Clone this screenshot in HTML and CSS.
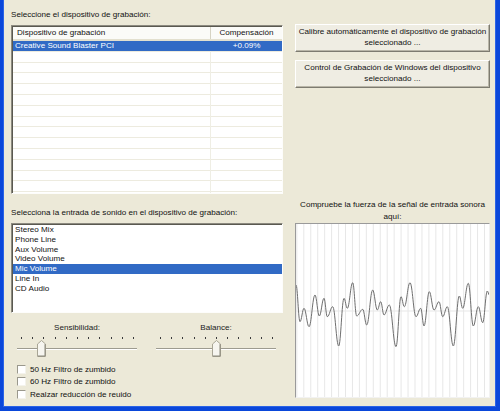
FILE: index.html
```html
<!DOCTYPE html>
<html>
<head>
<meta charset="utf-8">
<link rel="stylesheet" href="styles.css">
</head>
<body>
<div class="window">
  <div class="content">
    <div class="col-left">
      <div class="label l1">Seleccione el dispositivo de grabación:</div>
      <div class="listview">
        <div class="lv-header">
          <div class="lv-h c1">Dispositivo de grabación</div>
          <div class="lv-h c2">Compensación</div>
        </div>
        <div class="lv-body">
          <div class="lv-row sel">
            <div class="c1">Creative Sound Blaster PCI</div>
            <div class="c2">+0.09%</div>
          </div>
        </div>
      </div>
      <div class="label l2">Selecciona la entrada de sonido en el dispositivo de grabación:</div>
      <div class="listbox">
        <div class="li">Stereo Mix</div>
        <div class="li">Phone Line</div>
        <div class="li">Aux Volume</div>
        <div class="li">Video Volume</div>
        <div class="li sel">Mic Volume</div>
        <div class="li">Line In</div>
        <div class="li">CD Audio</div>
      </div>
      <div class="sliders">
        <div class="slider">
          <div class="s-label">Sensibilidad:</div>
          <div class="ticks"><span></span><span></span><span></span><span></span><span></span><span></span><span></span><span></span><span></span><span></span><span></span></div>
          <div class="track-area">
            <div class="groove"></div>
            <svg class="thumb thumb-sens" width="9" height="17" viewBox="0 0 9 17"><path d="M0.5 4 L4.5 0.5 L8.5 4 V16.5 H0.5 Z" fill="#f6f5ef" stroke="#a8a595"/><path d="M8 4.2 V16 H1" fill="none" stroke="#8a887b"/></svg>
          </div>
        </div>
        <div class="slider">
          <div class="s-label">Balance:</div>
          <div class="ticks"><span></span><span></span><span></span><span></span><span></span><span></span><span></span><span></span><span></span><span></span><span></span></div>
          <div class="track-area">
            <div class="groove"></div>
            <svg class="thumb thumb-bal" width="9" height="17" viewBox="0 0 9 17"><path d="M0.5 4 L4.5 0.5 L8.5 4 V16.5 H0.5 Z" fill="#f6f5ef" stroke="#a8a595"/><path d="M8 4.2 V16 H1" fill="none" stroke="#8a887b"/></svg>
          </div>
        </div>
      </div>
      <div class="checks">
        <div class="check"><span class="box"></span>50 Hz Filtro de zumbido</div>
        <div class="check"><span class="box"></span>60 Hz Filtro de zumbido</div>
        <div class="check"><span class="box"></span>Realzar reducción de reuido</div>
      </div>
    </div>
    <div class="col-right">
      <div class="btn b1">Calibre automáticamente el dispositivo de grabación<br>seleccionado ...</div>
      <div class="btn b2">Control de Grabación de Windows del dispositivo<br>seleccionado ...</div>
      <div class="g-label">Compruebe la fuerza de la señal de entrada sonora<br>aquí:</div>
      <div class="graph">
        <svg class="graph-svg" viewBox="1 1 193 173" preserveAspectRatio="none">
          <defs>
            <pattern id="vgrid" x="8.3" y="0" width="6.95" height="175" patternUnits="userSpaceOnUse">
              <rect x="0" y="0" width="1" height="175" fill="#e7e7e7"/>
            </pattern>
          </defs>
          <rect x="0" y="0" width="195" height="175" fill="#ffffff"/>
          <rect x="0" y="0" width="195" height="175" fill="url(#vgrid)"/>
          <rect x="0" y="87.5" width="195" height="1" fill="#e7e7e7"/>
          <path fill="none" stroke="#6e6e6e" stroke-width="1" d="M1 62 C2.6 62,3.4 98.7,5 98.7 C6.6 98.7,7.4 85.3,9 85.3 C11 85.3,12 103.7,14 103.7 C16.4 103.7,17.6 72,20 72 C21.7 72,22.6 93,24.3 93 C26.2 93,27.1 75.3,29 75.3 C30.3 75.3,31 93.7,32.3 93.7 C34.5 93.7,35.5 83.7,37.7 83.7 C40.1 83.7,41.3 123,43.7 123 C45.8 123,46.9 75.3,49 75.3 C50.3 75.3,51 85.3,52.3 85.3 C54.5 85.3,55.5 59.7,57.7 59.7 C59.3 59.7,60.1 93,61.7 93 C64.1 93,65.3 86.3,67.7 86.3 C69.3 86.3,70.1 102,71.7 102 C74.1 102,75.3 67,77.7 67 C79.5 67,80.5 87,82.3 87 C83.7 87,84.3 78.7,85.7 78.7 C87 78.7,87.7 92,89 92 C91.1 92,92.2 82,94.3 82 C97 82,98.3 123.7,101 123.7 C103 123.7,104 73.7,106 73.7 C107.3 73.7,108 83.7,109.3 83.7 C111.6 83.7,112.7 59.7,115 59.7 C117.4 59.7,118.6 93.7,121 93.7 C122.9 93.7,123.8 85.3,125.7 85.3 C127 85.3,127.7 103,129 103 C131.1 103,132.2 68.7,134.3 68.7 C136.2 68.7,137.1 87,139 87 C141 87,142 78.7,144 78.7 C145.5 78.7,146.2 93.7,147.7 93.7 C149.5 93.7,150.5 83.7,152.3 83.7 C154.7 83.7,155.9 123,158.3 123 C160.7 123,161.9 73,164.3 73 C165.7 73,166.3 85.3,167.7 85.3 C169.9 85.3,171.1 60.3,173.3 60.3 C175.3 60.3,176.3 103,178.3 103 C180.3 103,181.3 83.7,183.3 83.7 C185.1 83.7,185.9 99.7,187.7 99.7 C189.5 99.7,190.5 68,192.3 68 C193.1 68,193.5 72,194.3 72"/>
        </svg>
      </div>
    </div>
  </div>
</div>
</body>
</html>
```

FILE: styles.css
```css
html, body {
  margin: 0;
  padding: 0;
  background: #ece9d8;
}
body {
  font-family: "Liberation Sans", Arial, sans-serif;
  font-size: 8.1px;
  color: #111;
}
.window {
  width: 500px;
  height: 411px;
  box-sizing: border-box;
  background: #ece9d8;
  border-left: 3px solid #0a47da;
  border-right: 4px solid #0a47da;
  border-bottom: 4px solid #0a47da;
  box-shadow: inset 1px 0 #2a63e6, inset -1px -1px #2a63e6;
}
.content {
  display: flex;
  gap: 12px;
  padding-left: 8px;
}
.col-left {
  width: 272px;
  display: flex;
  flex-direction: column;
}
.col-right {
  width: 195px;
  display: flex;
  flex-direction: column;
}
.label {
  line-height: 12px;
  height: 12px;
  white-space: nowrap;
}
.l1 { margin-top: 9px; }
.l2 { margin-top: 13px; }

.listview {
  margin-top: 4px;
  height: 169px;
  box-sizing: border-box;
  background: #fff;
  border-top: 1px solid #8c8a80;
  border-left: 1px solid #8c8a80;
  border-right: 1px solid #fdfdfb;
  border-bottom: 1px solid #fdfdfb;
  box-shadow: inset 1px 1px #5a5950;
  display: flex;
  flex-direction: column;
  overflow: hidden;
}
.lv-header {
  display: flex;
  height: 12px;
  line-height: 12px;
  margin-left: 1px;
  margin-top: 1px;
  background: #fbfbf8;
  border-bottom: 2px solid #e3e0cf;
}
.c1 { width: 198px; box-sizing: border-box; white-space: nowrap; }
.c2 { flex: 1; text-align: center; white-space: nowrap; }
.lv-h.c1 { padding-left: 4px; border-right: 1px solid #d6d3c3; }
.lv-body {
  flex: 1;
  margin-left: 1px;
  background:
    linear-gradient(to right, transparent 0 197.5px, #efeee4 197.5px 198.5px, transparent 198.5px),
    repeating-linear-gradient(to bottom, #ffffff 0 9.8px, #edebdf 9.8px 10.8px);
}
.lv-row {
  display: flex;
  height: 9.8px;
  line-height: 10px;
}
.lv-row .c1 { padding-left: 2px; }
.lv-row.sel { background: #316ac5; color: #fff; }

.listbox {
  margin-top: 4px;
  height: 90px;
  box-sizing: border-box;
  background: #fff;
  border-top: 1px solid #8c8a80;
  border-left: 1px solid #8c8a80;
  border-right: 1px solid #fdfdfb;
  border-bottom: 1px solid #fdfdfb;
  box-shadow: inset 1px 1px #5a5950;
  padding-top: 1px;
  padding-left: 1px;
}
.li {
  height: 9.8px;
  line-height: 9.8px;
  padding-left: 2px;
  white-space: nowrap;
}
.li.sel { background: #316ac5; color: #fff; }

.sliders {
  display: flex;
  gap: 19px;
  margin-top: 9px;
  margin-left: 6px;
}
.slider {
  width: 120px;
  display: flex;
  flex-direction: column;
}
.s-label {
  text-align: center;
  line-height: 12px;
  height: 12px;
  color: #222;
}
.ticks {
  margin-top: 3px;
  height: 2px;
  display: flex;
  justify-content: space-between;
  padding: 0 3px 0 4px;
}
.ticks span {
  width: 1px;
  height: 2px;
  background: #3a3a3a;
}
.track-area {
  position: relative;
  margin-top: 2px;
  height: 16px;
}
.groove {
  margin-top: 7px;
  height: 1px;
  background: #9d9b8f;
  border-bottom: 1px solid #ffffff;
}
.thumb {
  position: absolute;
  top: -1px;
}
.thumb-sens { left: 20px; }
.thumb-bal { left: 56px; }

.checks {
  margin-top: 6px;
  padding-left: 6px;
  display: flex;
  flex-direction: column;
}
.check {
  height: 12.5px;
  display: flex;
  align-items: center;
  white-space: nowrap;
}
.box {
  width: 9px;
  height: 9px;
  box-sizing: border-box;
  background: #fff;
  border-top: 1px solid #9a988c;
  border-left: 1px solid #9a988c;
  border-right: 1px solid #f4f3ec;
  border-bottom: 1px solid #f4f3ec;
  margin-right: 4px;
}

.btn {
  height: 28px;
  box-sizing: border-box;
  display: flex;
  align-items: center;
  justify-content: center;
  text-align: center;
  line-height: 10.5px;
  background: #efede3;
  border-top: 1px solid #ffffff;
  border-left: 1px solid #ffffff;
  border-right: 1px solid #7d7b70;
  border-bottom: 1px solid #7d7b70;
  box-shadow: inset -1px -1px #b9b6a8;
  padding-bottom: 1px;
}
.b1 { margin-top: 24px; }
.b2 { margin-top: 8px; }
.g-label {
  margin-top: 111px;
  text-align: center;
  line-height: 12px;
  white-space: nowrap;
}
.graph {
  height: 175px;
  box-sizing: border-box;
  background: #fff;
  border-top: 1px solid #9a9a9a;
  border-left: 1px solid #9a9a9a;
  border-right: 1px solid #f2f2f2;
  border-bottom: 1px solid #f2f2f2;
}
.graph-svg {
  display: block;
  width: 100%;
  height: 100%;
}
```
